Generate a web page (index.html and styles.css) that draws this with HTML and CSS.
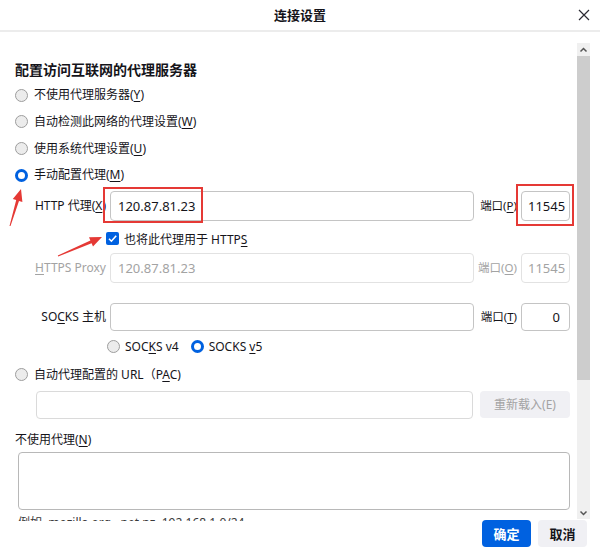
FILE: index.html
```html
<!DOCTYPE html>
<html lang="zh-CN">
<head>
<meta charset="utf-8">
<title>连接设置</title>
<link rel="stylesheet" href="styles.css">
</head>
<body>
<div class="dialog">
  <header class="titlebar">
    <span class="spacer"></span>
    <span class="title">连接设置</span>
    <span class="close-wrap">
      <svg class="close" width="12" height="12" viewBox="0 0 12 12"><path d="M1 1 L11 11 M11 1 L1 11" stroke="#2b2a33" stroke-width="1.2" fill="none"/></svg>
    </span>
  </header>

  <div class="main">
    <div class="scroll">
      <h2 class="heading">配置访问互联网的代理服务器</h2>
      <div class="radio-row"><span class="radio"></span><span>不使用代理服务器(<u>Y</u>)</span></div>
      <div class="radio-row"><span class="radio"></span><span>自动检测此网络的代理设置(<u>W</u>)</span></div>
      <div class="radio-row"><span class="radio"></span><span>使用系统代理设置(<u>U</u>)</span></div>
      <div class="radio-row"><span class="radio on"></span><span>手动配置代理(<u>M</u>)</span></div>

      <div class="proxy-row row-http">
        <span class="plabel">HTTP 代理(<u>X</u>)</span>
        <div class="field">120.87.81.23</div>
        <span class="portlabel">端口(<u>P</u>)</span>
        <div class="field port">11545</div>
      </div>

      <div class="check-row">
        <span class="checkbox"><svg width="13" height="13" viewBox="0 0 13 13"><path d="M3 6.8 L5.4 9.2 L10.2 3.8" stroke="#fff" stroke-width="1.6" fill="none"/></svg></span>
        <span>也将此代理用于 HTTP<u>S</u></span>
      </div>

      <div class="proxy-row row-https disabled">
        <span class="plabel"><u>H</u>TTPS Proxy</span>
        <div class="field">120.87.81.23</div>
        <span class="portlabel">端口(<u>O</u>)</span>
        <div class="field port">11545</div>
      </div>

      <div class="proxy-row row-socks">
        <span class="plabel">SO<u>C</u>KS 主机</span>
        <div class="field"></div>
        <span class="portlabel">端口(<u>T</u>)</span>
        <div class="field port end">0</div>
      </div>

      <div class="socks-ver">
        <span class="radio"></span><span class="ver-text">SOC<u>K</u>S v4</span>
        <span class="radio on"></span><span>SOCKS <u>v</u>5</span>
      </div>

      <div class="radio-row pac-radio"><span class="radio"></span><span>自动代理配置的 URL（P<u>A</u>C)</span></div>

      <div class="pac-row">
        <div class="field pac-field"></div>
        <div class="reload">重新载入(E)</div>
      </div>

      <div class="noproxy-label">不使用代理(<u>N</u>)</div>
      <div class="textarea"></div>
      <div class="hint">例如 .mozilla.org, .net.nz, 192.168.1.0/24</div>
    </div>

    <div class="scrollbar">
      <div class="sb-btn"><svg width="9" height="6" viewBox="0 0 9 6"><path d="M1.5 4.5 L4.5 1.5 L7.5 4.5" stroke="#555" stroke-width="1.5" fill="none"/></svg></div>
      <div class="sb-thumb"></div>
      <div class="sb-track"></div>
      <div class="sb-btn"><svg width="9" height="6" viewBox="0 0 9 6"><path d="M1.5 1.5 L4.5 4.5 L7.5 1.5" stroke="#555" stroke-width="1.5" fill="none"/></svg></div>
    </div>
  </div>

  <footer class="footer">
    <button class="btn primary">确定</button>
    <button class="btn">取消</button>
  </footer>

  <svg class="annot" width="600" height="555" viewBox="0 0 600 555">
    <rect x="104" y="188" width="98" height="34" fill="none" stroke="#e53935" stroke-width="2"/>
    <rect x="517" y="185" width="56" height="40" fill="none" stroke="#e53935" stroke-width="2"/>
    <polygon points="21,189 22.4,201.9 19,200.9 10.5,226.1 9.5,225.9 16.2,200.1 12.8,199.1" fill="#e53935"/>
    <polygon points="102,237 93,246.4 91.6,243.2 58.2,256.5 57.8,255.5 90.4,240.4 89,237.2" fill="#e53935"/>
  </svg>
</div>
</body>
</html>
```

FILE: styles.css
```css
html, body {
  margin: 0;
  padding: 0;
  background: #ffffff;
}

body {
  font-family: "Noto Sans", "Noto Sans CJK SC", sans-serif;
  font-size: 12px;
  color: #15141a;
}

u {
  text-decoration: underline;
  text-underline-offset: 2px;
}

.dialog {
  position: relative;
  width: 600px;
  height: 555px;
  overflow: hidden;
  display: flex;
  flex-direction: column;
}

/* title bar */
.titlebar {
  height: 30px;
  flex: none;
  border-bottom: 2px solid #ececec;
  display: grid;
  grid-template-columns: 1fr auto 1fr;
  align-items: center;
}

.title {
  font-weight: 700;
  font-size: 13px;
  line-height: 18px;
}

.close-wrap {
  justify-self: end;
  margin-right: 10px;
  display: flex;
}

/* main area */
.main {
  display: flex;
  height: 489px;
  flex: none;
}

.scroll {
  width: 577px;
  flex: none;
  box-sizing: border-box;
  padding: 28px 0 0 15px;
  overflow: hidden;
  display: flex;
  flex-direction: column;
}

.scroll > * {
  flex: none;
}

.heading {
  margin: 0 0 2px 0;
  font-size: 14px;
  font-weight: 700;
  line-height: 20px;
}

.radio-row {
  display: flex;
  align-items: center;
  gap: 6px;
  height: 26.67px;
  line-height: 16px;
}

.radio {
  width: 13px;
  height: 13px;
  flex: none;
  box-sizing: border-box;
  border-radius: 50%;
  border: 1px solid #9d9d9d;
  background: #ececec;
}

.radio.on {
  border: 3.5px solid #0061e0;
  background: #ffffff;
}

/* proxy rows */
.proxy-row {
  display: grid;
  grid-template-columns: 91px 364px 39px 49px;
  column-gap: 4px;
  align-items: center;
  height: 30px;
}

.row-http { margin-top: 2px; }
.row-https { margin-top: 4px; }
.row-socks { margin-top: 20px; height: 28px; }

.plabel,
.portlabel {
  text-align: right;
  white-space: nowrap;
  font-size: 12px;
  line-height: 16px;
}

.portlabel {
  font-size: 11.5px;
}

.field {
  height: 100%;
  box-sizing: border-box;
  border: 1px solid #c4c4c4;
  border-radius: 4px;
  padding-left: 7px;
  font-size: 13px;
  display: flex;
  align-items: center;
  background: #fff;
}

.field.port {
  padding-left: 6px;
}

.field.end {
  justify-content: flex-end;
  padding-right: 9px;
}

.disabled .plabel,
.disabled .portlabel,
.disabled .field {
  color: #a3a3a3;
}

.disabled .field {
  border-color: #e2e2e2;
}

/* checkbox */
.check-row {
  display: flex;
  align-items: center;
  gap: 5px;
  margin: 8px 0 0 91px;
  height: 20px;
  font-size: 12px;
}

.checkbox {
  width: 13px;
  height: 13px;
  flex: none;
  background: #0061e0;
  border-radius: 2px;
  display: flex;
}

/* socks version */
.socks-ver {
  display: flex;
  align-items: center;
  gap: 5px;
  margin: 6px 0 0 92px;
  height: 20px;
}

.ver-text {
  margin-right: 7px;
}

.pac-radio {
  margin-top: 8px;
  height: 20px;
}

.pac-row {
  display: flex;
  gap: 7px;
  margin: 6px 0 0 21px;
  height: 28px;
}

.pac-field {
  width: 437px;
  flex: none;
  border-color: #dadada;
}

.reload {
  width: 90px;
  height: 27px;
  border-radius: 4px;
  background: #f0f0f4;
  color: #a3a3a3;
  display: flex;
  align-items: center;
  justify-content: center;
  font-size: 12px;
}

.noproxy-label {
  margin-top: 11px;
  height: 20px;
  line-height: 20px;
}

.textarea {
  margin: 2px 0 0 3px;
  width: 552px;
  height: 58px;
  box-sizing: border-box;
  border: 1px solid #b8b8b8;
  border-radius: 4px;
}

.hint {
  margin: 5px 0 0 3px;
  line-height: 16px;
  white-space: nowrap;
  color: #3a3a3a;
}

/* scrollbar */
.scrollbar {
  width: 13px;
  flex: none;
  margin-top: 11px;
  height: 476px;
  background: #f0f0f0;
  display: flex;
  flex-direction: column;
}

.sb-btn {
  height: 13px;
  flex: none;
  display: flex;
  align-items: center;
  justify-content: center;
}

.sb-thumb {
  height: 324px;
  flex: none;
  background: #cdcdcd;
}

.sb-track {
  flex: 1;
}

/* footer */
.footer {
  display: flex;
  justify-content: flex-end;
  gap: 7px;
  padding-right: 13px;
  margin-top: -1px;
}

.btn {
  width: 49px;
  height: 27px;
  border: none;
  border-radius: 4px;
  background: #f0f0f4;
  color: #15141a;
  font-family: "Noto Sans", "Noto Sans CJK SC", sans-serif;
  font-size: 13px;
  font-weight: 700;
  padding: 0;
}

.btn.primary {
  background: #0061e0;
  color: #ffffff;
}

/* annotations */
.annot {
  position: absolute;
  left: 0;
  top: 0;
  pointer-events: none;
}
```
